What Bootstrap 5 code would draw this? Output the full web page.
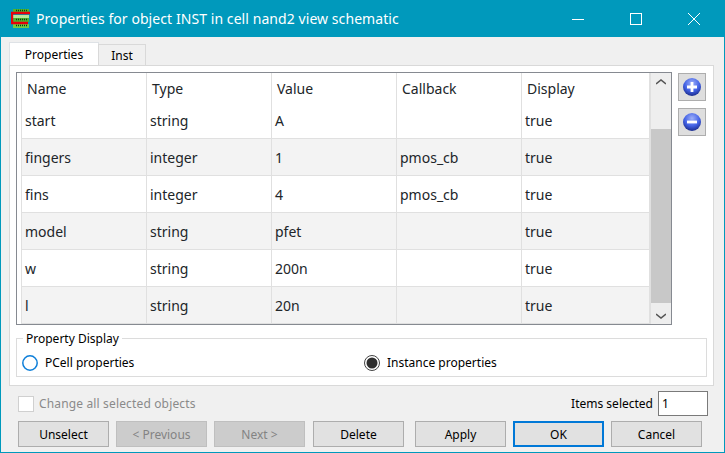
<!DOCTYPE html>
<html lang="en">
<head>
    <meta charset="UTF-8">
    <title>Properties for object INST</title>
    <link href="https://cdn.jsdelivr.net/npm/bootstrap@5.3.0/dist/css/bootstrap.min.css" rel="stylesheet">
    <style>
        html, body { height: 100%; }
        body {
            background: #f0f0f0;
            color: #000;
            font-family: "Noto Sans", "Liberation Sans", sans-serif;
            font-size: 12px;
            overflow: hidden;
        }
        .dlg-window {
            width: 725px;
            height: 453px;
            border: 1px solid #0099bc;
            border-top: 0;
        }
        .dlg-title {
            height: 37px;
            margin: 0 -1px;
            padding: 0 2px 0 11px;
            background: #0099bc;
            color: #fff;
            font-size: 14px;
            letter-spacing: .07px;
        }
        .dlg-title .title-text { margin-left: 6px; }
        .win-btn { width: 58px; height: 37px; }
        .dlg-body { padding: 5px 10px 0 8px; }
        .dlg-tabs { border: 0; height: 23px; align-items: flex-end; }
        .dlg-tabs .nav-link {
            padding: 0;
            border-radius: 0;
            border: 1px solid #d9d9d9;
            border-bottom: 0;
            color: #000;
            background: #f0f0f0;
            margin: 0;
            height: 21px;
            line-height: 21px;
            width: 48px;
            margin-left: -1px;
            text-align: center;
        }
        .dlg-tabs .nav-link.active {
            width: 90px;
            height: 23px;
            line-height: 24px;
            margin-left: 0;
            background: #fff;
        }
        .dlg-pane {
            height: 321px;
            background: #fff;
            border: 1px solid #d9d9d9;
            padding: 6px 6px 0 6px;
        }
        .prop-frame {
            height: 253px;
            width: 656px;
            border: 1px solid #868a91;
            background: #fff;
        }
        .prop-scroll { padding-left: 4px; width: 633px; overflow: hidden; }
        .prop-table {
            table-layout: fixed;
            width: 629px;
            margin: 0;
            font-size: 14px;
            border-collapse: separate;
            border-spacing: 0;
        }
        .prop-table th, .prop-table td {
            padding: 0 0 0 3px;
            border-right: 1px solid #e0e0e0;
            border-bottom: 1px solid #e0e0e0;
            height: 37px;
            font-weight: 400;
            vertical-align: middle;
            background: transparent;
            box-shadow: none;
        }
        .prop-table th:first-child, .prop-table td:first-child { border-left: 1px solid #e0e0e0; }
        .prop-table th {
            height: 29px;
            border-bottom: 0;
            padding: 1px 0 0 5px;
        }
        .prop-table tr.row-alt td { background: #f3f3f3; }
        .prop-scrollbar {
            width: 21px;
            background: #eeeeee;
            border-left: 1px solid #e0e0e0;
        }
        .sb-arrow { height: 17px; }
        .sb-track { height: 217px; padding-top: 39px; }
        .sb-thumb { height: 174px; background: #c8c8c8; }
        .side-col { margin: 1px 0 0 6px; gap: 7px; }
        .side-btn {
            width: 28px;
            height: 28px;
            background: #dedede;
            border: 1px solid #adadad;
            border-radius: 0;
            padding: 0;
        }
        .group-box {
            position: relative;
            height: 39px;
            margin-top: 13px;
            padding-top: 10px;
            width: 691px;
            border: 1px solid #dcdcdc;
            background: #fff;
        }
        .group-legend {
            position: absolute;
            top: -8px;
            left: 6px;
            padding: 0 3px;
            background: #fff;
            line-height: 16px;
        }
        .radio-cell-a { width: 347px; padding-left: 5px; }
        .radio-label { margin-left: 7px; }
        .dlg-footer { padding: 0; }
        .sel-row { height: 35px; padding: 0 16px 0 17px; }
        .check-off { width: 16px; height: 16px; background: #fff; border: 1px solid #d0d0d0; }
        .muted-label { color: #8a8a8a; margin-left: 5px; letter-spacing: .15px; }
        .sel-input {
            width: 50px;
            height: 25px;
            border: 1px solid #7a7a7a;
            border-radius: 0;
            background: #fff;
            padding: 0 3px;
            margin-left: 5px;
            line-height: 23px;
            font-size: 12px;
        }
        .btn-row { padding: 0 0 0 17px; }
        .dlg-btn {
            width: 91px;
            height: 26px;
            padding: 1px 0 0;
            margin-left: 7px;
            font-size: 12px;
            color: #000;
            background: #e1e1e1;
            border: 1px solid #adadad;
            border-radius: 0;
        }
        .dlg-btn:first-child { margin-left: 0; }
        .dlg-btn.gap-md { margin-left: 8px; }
        .dlg-btn.gap-lg { margin-left: 11px; }
        .dlg-btn:disabled { opacity: 1; background: #cccccc; border-color: #bfbfbf; color: #838383; }
        .dlg-btn.is-default { border: 2px solid #0078d7; }
    </style>
</head>
<body>
    <div class="dlg-window d-flex flex-column">
        <div class="dlg-title d-flex align-items-center">
            <svg width="19" height="19" viewBox="0 0 19 19">
                <rect x="2" y="0" width="16" height="3" fill="#4fb52e"/>
                <rect x="2" y="6" width="16" height="7" fill="#4fb52e"/>
                <rect x="2" y="6" width="16" height="3" fill="#b5e79a"/>
                <rect x="2" y="15" width="16" height="4" fill="#6fcf45"/>
                <path d="M19 4H1v10h16" fill="none" stroke="#e8000b" stroke-width="2.4"/>
                <path d="M5 1.500h11M5 10.500h11M5 16.500h11" stroke="#073d12" stroke-width="1.500" stroke-dasharray="1 1"/>
            </svg>
            <span class="title-text flex-grow-1">Properties for object INST in cell nand2 view schematic</span>
            <div class="win-btn d-flex align-items-center justify-content-center">
                <svg width="12" height="12"><path d="M0 6.500h12" stroke="#fff"/></svg>
            </div>
            <div class="win-btn d-flex align-items-center justify-content-center">
                <svg width="12" height="12"><rect x=".5" y=".5" width="11" height="11" fill="none" stroke="#fff"/></svg>
            </div>
            <div class="win-btn d-flex align-items-center justify-content-center">
                <svg width="12" height="12"><path d="M0 0l12 12M12 0L0 12" stroke="#fff"/></svg>
            </div>
        </div>

        <div class="dlg-body">
            <ul class="nav nav-tabs dlg-tabs">
                <li class="nav-item"><a class="nav-link active" href="#">Properties</a></li>
                <li class="nav-item"><a class="nav-link" href="#">Inst</a></li>
            </ul>
            <div class="dlg-pane">
                <div class="d-flex">
                    <div class="prop-frame d-flex">
                        <div class="prop-scroll flex-shrink-0">
                            <table class="table prop-table">
                                <colgroup><col style="width:126px"><col style="width:125px"><col style="width:125px"><col style="width:125px"><col></colgroup>
                                <thead>
                                    <tr><th>Name</th><th>Type</th><th>Value</th><th>Callback</th><th>Display</th></tr>
                                </thead>
                                <tbody>
                                    <tr><td>start</td><td>string</td><td>A</td><td></td><td>true</td></tr>
                                    <tr class="row-alt"><td>fingers</td><td>integer</td><td>1</td><td>pmos_cb</td><td>true</td></tr>
                                    <tr><td>fins</td><td>integer</td><td>4</td><td>pmos_cb</td><td>true</td></tr>
                                    <tr class="row-alt"><td>model</td><td>string</td><td>pfet</td><td></td><td>true</td></tr>
                                    <tr><td>w</td><td>string</td><td>200n</td><td></td><td>true</td></tr>
                                    <tr class="row-alt"><td>l</td><td>string</td><td>20n</td><td></td><td>true</td></tr>
                                </tbody>
                            </table>
                        </div>
                        <div class="prop-scrollbar d-flex flex-column">
                            <div class="sb-arrow d-flex align-items-center justify-content-center">
                                <svg width="10" height="6"><path d="M0 5l5-4 5 4" fill="none" stroke="#555" stroke-width="1.6"/></svg>
                            </div>
                            <div class="sb-track flex-grow-1"><div class="sb-thumb"></div></div>
                            <div class="sb-arrow d-flex align-items-center justify-content-center">
                                <svg width="10" height="6"><path d="M0 1l5 4 5-4" fill="none" stroke="#555" stroke-width="1.6"/></svg>
                            </div>
                        </div>
                    </div>
                    <div class="d-flex flex-column side-col">
                        <button class="side-btn d-flex align-items-center justify-content-center" type="button">
                            <svg width="18" height="18" viewBox="0 0 18 18">
                                <defs><radialGradient id="ball" cx=".5" cy=".3" r=".75"><stop offset="0" stop-color="#9fb0f8"/><stop offset=".55" stop-color="#4463e6"/><stop offset="1" stop-color="#14237e"/></radialGradient></defs>
                                <circle cx="9" cy="9" r="9" fill="url(#ball)"/>
                                <path d="M4 9h10M9 4v10" stroke="#fff" stroke-width="2.800"/>
                            </svg>
                        </button>
                        <button class="side-btn d-flex align-items-center justify-content-center" type="button">
                            <svg width="18" height="18" viewBox="0 0 18 18">
                                <circle cx="9" cy="9" r="9" fill="url(#ball)"/>
                                <path d="M4 9h10" stroke="#fff" stroke-width="2.800"/>
                            </svg>
                        </button>
                    </div>
                </div>
                <div class="group-box d-flex align-items-center">
                    <span class="group-legend">Property Display</span>
                    <div class="radio-cell-a d-flex align-items-center">
                        <svg width="16" height="16"><circle cx="8" cy="8" r="7.200" fill="#fff" stroke="#0e7fd9" stroke-width="1.500"/></svg>
                        <span class="radio-label">PCell properties</span>
                    </div>
                    <div class="d-flex align-items-center">
                        <svg width="16" height="16"><circle cx="8" cy="8" r="7.500" fill="#fff" stroke="#444"/><circle cx="8" cy="8" r="5.500" fill="#2e2e2e"/></svg>
                        <span class="radio-label">Instance properties</span>
                    </div>
                </div>
            </div>
        </div>

        <div class="dlg-footer">
            <div class="sel-row d-flex align-items-center">
                <span class="check-off"></span>
                <span class="muted-label flex-grow-1">Change all selected objects</span>
                <span>Items selected</span>
                <div class="sel-input">1</div>
            </div>
            <div class="btn-row d-flex">
                <button class="dlg-btn" type="button">Unselect</button>
                <button class="dlg-btn" type="button" disabled>&lt; Previous</button>
                <button class="dlg-btn" type="button" disabled>Next &gt;</button>
                <button class="dlg-btn gap-md" type="button">Delete</button>
                <button class="dlg-btn gap-lg" type="button">Apply</button>
                <button class="dlg-btn is-default" type="button">OK</button>
                <button class="dlg-btn" type="button">Cancel</button>
            </div>
        </div>
    </div>
</body>
</html>
